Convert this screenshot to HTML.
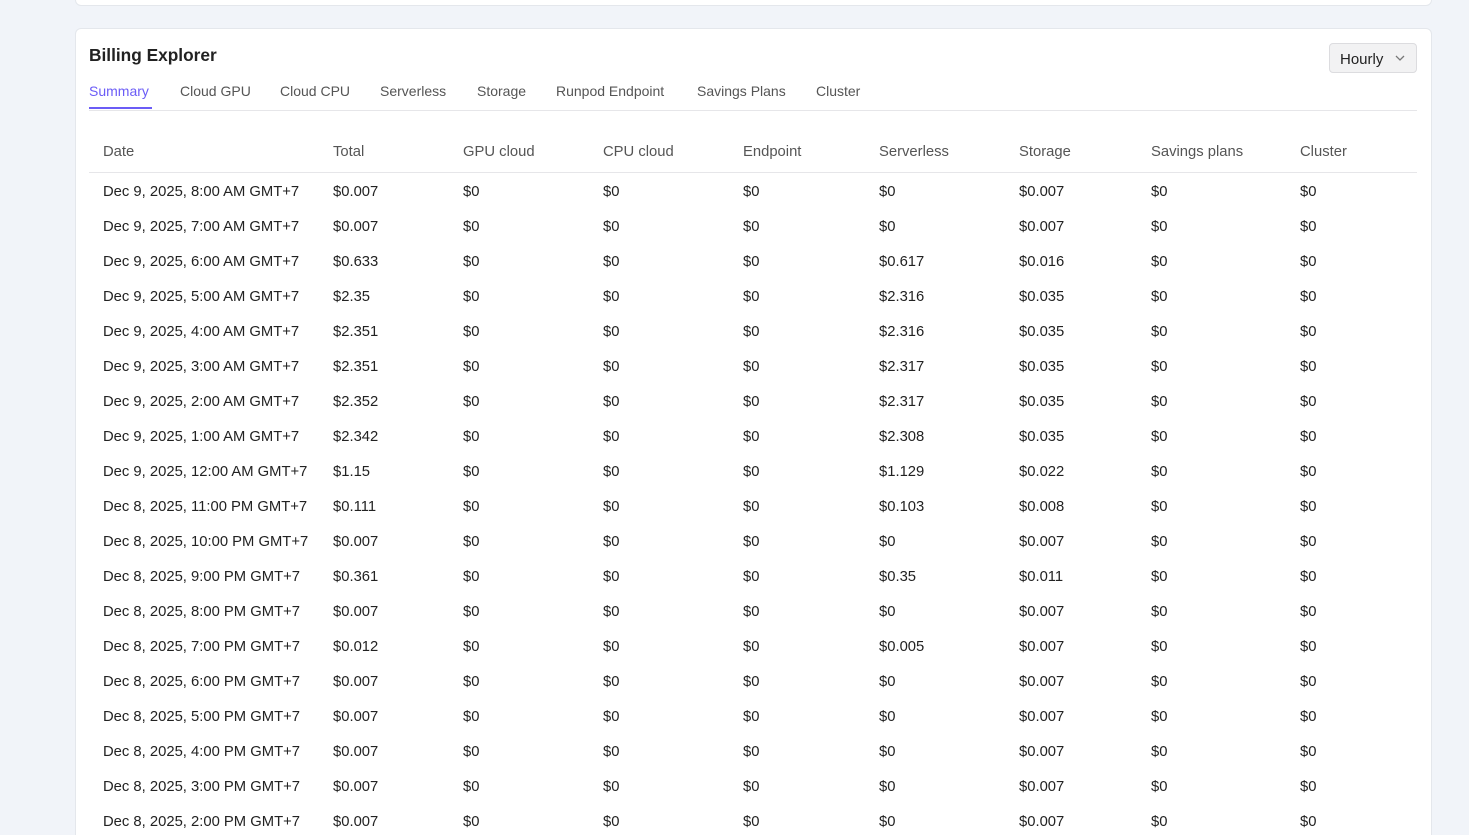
<!DOCTYPE html>
<html><head><style>
*{margin:0;padding:0;box-sizing:border-box}
html,body{width:1469px;height:835px;overflow:hidden}
body{background:#f1f4f9;font-family:"Liberation Sans",sans-serif;position:relative}
.top{position:absolute;left:75px;top:-10px;width:1357px;height:16px;background:#fff;border:1px solid #e4e7ec;border-radius:6px}
.card{position:absolute;left:75px;top:28px;width:1357px;height:820px;background:#fff;border:1px solid #e4e7ec;border-radius:6px}
h1{position:absolute;left:89px;top:45px;font-size:17.3px;font-weight:bold;color:#222}
.dd{position:absolute;left:1329px;top:43px;width:88px;height:30px;background:#f2f2f3;border:1px solid #dcdcdf;border-radius:4px;font-size:15px;color:#222;padding:7px 0 0 10px}
.dd svg{position:absolute;right:11px;top:11px}
.tabs{position:absolute;left:89px;top:83px;font-size:14px;color:#555}
.tabs span{position:absolute;white-space:nowrap}
.tabline{position:absolute;left:89px;top:110px;width:1328px;height:1px;background:#e6e6e9}
.ul{position:absolute;left:89px;top:107px;width:63px;height:2px;background:#6b5cf6}
.hl{position:absolute;left:89px;top:172px;width:1328px;height:1px;background:#e6e6e9}
.c{position:absolute;font-size:14.8px;white-space:nowrap;color:#222;line-height:16px}
.h{color:#555}
</style></head><body>
<div class="top"></div>
<div class="card"></div>
<h1>Billing Explorer</h1>
<div class="dd">Hourly<svg width="10" height="6" viewBox="0 0 10 6"><path d="M1 1l4 4 4-4" stroke="#777" stroke-width="1.3" fill="none"/></svg></div>
<div class="tabs">
<span style="left:0;color:#6b5cf6">Summary</span><span style="left:91px">Cloud GPU</span><span style="left:191px">Cloud CPU</span><span style="left:291px">Serverless</span><span style="left:388px">Storage</span><span style="left:467px">Runpod Endpoint</span><span style="left:608px">Savings Plans</span><span style="left:727px">Cluster</span>
</div>
<div class="tabline"></div><div class="ul"></div>
<div class="hl"></div>
<div id="t"></div>
<script>
var xs=[103,333,463,603,743,879,1019,1151,1300];
var hd=["Date","Total","GPU cloud","CPU cloud","Endpoint","Serverless","Storage","Savings plans","Cluster"];
var rows=[
["Dec 9, 2025, 8:00 AM GMT+7","$0.007","$0","$0.007"],
["Dec 9, 2025, 7:00 AM GMT+7","$0.007","$0","$0.007"],
["Dec 9, 2025, 6:00 AM GMT+7","$0.633","$0.617","$0.016"],
["Dec 9, 2025, 5:00 AM GMT+7","$2.35","$2.316","$0.035"],
["Dec 9, 2025, 4:00 AM GMT+7","$2.351","$2.316","$0.035"],
["Dec 9, 2025, 3:00 AM GMT+7","$2.351","$2.317","$0.035"],
["Dec 9, 2025, 2:00 AM GMT+7","$2.352","$2.317","$0.035"],
["Dec 9, 2025, 1:00 AM GMT+7","$2.342","$2.308","$0.035"],
["Dec 9, 2025, 12:00 AM GMT+7","$1.15","$1.129","$0.022"],
["Dec 8, 2025, 11:00 PM GMT+7","$0.111","$0.103","$0.008"],
["Dec 8, 2025, 10:00 PM GMT+7","$0.007","$0","$0.007"],
["Dec 8, 2025, 9:00 PM GMT+7","$0.361","$0.35","$0.011"],
["Dec 8, 2025, 8:00 PM GMT+7","$0.007","$0","$0.007"],
["Dec 8, 2025, 7:00 PM GMT+7","$0.012","$0.005","$0.007"],
["Dec 8, 2025, 6:00 PM GMT+7","$0.007","$0","$0.007"],
["Dec 8, 2025, 5:00 PM GMT+7","$0.007","$0","$0.007"],
["Dec 8, 2025, 4:00 PM GMT+7","$0.007","$0","$0.007"],
["Dec 8, 2025, 3:00 PM GMT+7","$0.007","$0","$0.007"],
["Dec 8, 2025, 2:00 PM GMT+7","$0.007","$0","$0.007"]];
var h="";
hd.forEach(function(s,i){h+='<div class="c h" style="left:'+xs[i]+'px;top:144px">'+s+'</div>';});
rows.forEach(function(r,j){var v=[r[0],r[1],"$0","$0","$0",r[2],r[3],"$0","$0"];var y=184+35*j;
v.forEach(function(s,i){h+='<div class="c" style="left:'+xs[i]+'px;top:'+y+'px">'+s+'</div>';});});
document.getElementById("t").innerHTML=h;
</script>
</body></html>
